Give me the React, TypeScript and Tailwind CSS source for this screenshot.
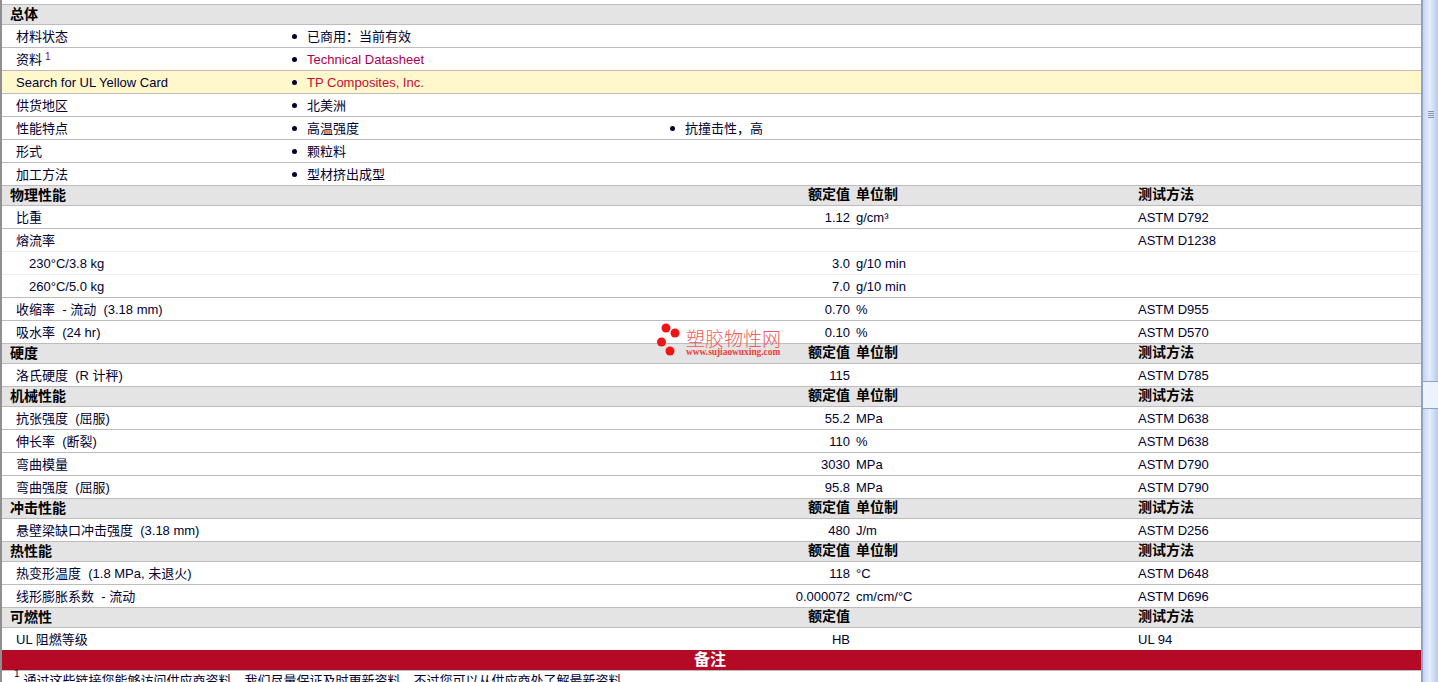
const FONT = "font-['Liberation_Sans','Noto_Sans_CJK_SC',sans-serif]";

type Sect = { type: "section"; title: string; value?: string; unit?: string; test?: string };
type Prop = { type: "prop"; label: string; indent?: boolean; light?: boolean; value?: string; unit?: string; test?: string };
type Row = Sect | Prop;

const physical: Row[] = [
  { type: "section", title: "物理性能", value: "额定值", unit: "单位制", test: "测试方法" },
  { type: "prop", label: "比重", value: "1.12", unit: "g/cm³", test: "ASTM D792" },
  { type: "prop", label: "熔流率", light: true, test: "ASTM D1238" },
  { type: "prop", label: "230°C/3.8 kg", indent: true, light: true, value: "3.0", unit: "g/10 min" },
  { type: "prop", label: "260°C/5.0 kg", indent: true, value: "7.0", unit: "g/10 min" },
  { type: "prop", label: "收缩率  - 流动  (3.18 mm)", value: "0.70", unit: "%", test: "ASTM D955" },
  { type: "prop", label: "吸水率  (24 hr)", value: "0.10", unit: "%", test: "ASTM D570" },
  { type: "section", title: "硬度", value: "额定值", unit: "单位制", test: "测试方法" },
  { type: "prop", label: "洛氏硬度  (R 计秤)", value: "115", test: "ASTM D785" },
  { type: "section", title: "机械性能", value: "额定值", unit: "单位制", test: "测试方法" },
  { type: "prop", label: "抗张强度  (屈服)", value: "55.2", unit: "MPa", test: "ASTM D638" },
  { type: "prop", label: "伸长率  (断裂)", value: "110", unit: "%", test: "ASTM D638" },
  { type: "prop", label: "弯曲模量", value: "3030", unit: "MPa", test: "ASTM D790" },
  { type: "prop", label: "弯曲强度  (屈服)", value: "95.8", unit: "MPa", test: "ASTM D790" },
  { type: "section", title: "冲击性能", value: "额定值", unit: "单位制", test: "测试方法" },
  { type: "prop", label: "悬壁梁缺口冲击强度  (3.18 mm)", value: "480", unit: "J/m", test: "ASTM D256" },
  { type: "section", title: "热性能", value: "额定值", unit: "单位制", test: "测试方法" },
  { type: "prop", label: "热变形温度  (1.8 MPa, 未退火)", value: "118", unit: "°C", test: "ASTM D648" },
  { type: "prop", label: "线形膨胀系数  - 流动", value: "0.000072", unit: "cm/cm/°C", test: "ASTM D696" },
  { type: "section", title: "可燃性", value: "额定值", test: "测试方法" },
  { type: "prop", label: "UL 阻燃等级", value: "HB", test: "UL 94" },
];

function Bullet({ text, link }: { text: string; link?: string }) {
  return (
    <div className="flex items-center">
      <span className="w-[5px] h-[5px] rounded-full bg-[#000033] mr-[10px]" />
      <span className={link}>{text}</span>
    </div>
  );
}

function GeneralRow({ label, sup, yellow, children }: { label: string; sup?: boolean; yellow?: boolean; children: React.ReactNode }) {
  return (
    <div className={`flex items-center h-[23px] pt-[1px] border-b border-[#bdbbc0] ${yellow ? "bg-[#fff8cd]" : "bg-white"}`}>
      <div className="w-[290px] pl-[14px] whitespace-pre shrink-0">
        {label}
        {sup && <sup className="text-[#800080] text-[10px] ml-[3px] -top-[4px]">1</sup>}
      </div>
      {children}
    </div>
  );
}

function SectionRow({ row }: { row: Sect }) {
  return (
    <div className="flex items-center h-[20px] border-b border-[#bdbbc0] bg-[#e4e4e4] font-bold text-black text-[14px]">
      <div className="flex-1 pl-[8px] -mt-[2px]">{row.title}</div>
      <div className="w-[100px] text-right -mt-[4px]">{row.value}</div>
      <div className="w-[288px] pl-[6px] shrink-0 -mt-[4px]">{row.unit}</div>
      <div className="w-[283px] shrink-0 -mt-[4px]">{row.test}</div>
    </div>
  );
}

function PropRow({ row }: { row: Prop }) {
  return (
    <div className={`flex items-center h-[23px] pt-[1px] border-b bg-white ${row.light ? "border-[#eeeeee]" : "border-[#bdbbc0]"}`}>
      <div className={`flex-1 whitespace-pre ${row.indent ? "pl-[27px]" : "pl-[14px]"}`}>{row.label}</div>
      <div className="w-[100px] text-right">{row.value}</div>
      <div className="w-[288px] pl-[6px] shrink-0">{row.unit}</div>
      <div className="w-[283px] shrink-0">{row.test}</div>
    </div>
  );
}

function Watermark() {
  return (
    <div className="absolute left-[656px] top-[322px] w-[130px] h-[38px] pointer-events-none">
      <svg width="30" height="36" className="absolute left-0 top-0">
        <circle cx="10" cy="6" r="4.5" fill="#f01414" />
        <circle cx="19" cy="11" r="4.5" fill="#f01414" />
        <circle cx="5.5" cy="20" r="4.5" fill="#f01414" />
        <circle cx="14" cy="29" r="4.5" fill="#f01414" />
      </svg>
      <div className="absolute left-[30px] top-[6px] text-[19px] leading-[20px] text-[#f05a5a] font-light whitespace-nowrap font-['Noto_Sans_CJK_SC',sans-serif]">
        塑胶物性网
      </div>
      <div className="absolute left-[30px] top-[25px] text-[9.4px] leading-[10px] font-bold text-[#f03c3c] whitespace-nowrap font-['Liberation_Serif',serif]">
        www.sujiaowuxing.com
      </div>
    </div>
  );
}

function Scrollbar() {
  const track = "bg-[linear-gradient(90deg,#c3d5f2,#e4edfb_45%,#b6cbee)]";
  return (
    <aside className="w-[17px] shrink-0 flex flex-col border-l-2 border-[#8ea2c6]">
      <div className={`h-[382px] ${track} border-b border-[#8ea2c6] flex items-start justify-center pt-[111px]`}>
        <div className="w-[6px] flex flex-col gap-[1px]">
          <span className="h-[1px] bg-[#7f93b8]" />
          <span className="h-[1px] bg-[#7f93b8]" />
          <span className="h-[1px] bg-[#7f93b8]" />
          <span className="h-[1px] bg-[#7f93b8]" />
        </div>
      </div>
      <div className="h-[26px] bg-[#edf3fd]" />
      <div className={`flex-1 ${track} border-t border-[#8ea2c6]`} />
    </aside>
  );
}

export default function App() {
  return (
    <div className={`relative flex w-[1438px] h-[682px] overflow-hidden bg-white text-[13px] leading-[14px] text-[#000033] ${FONT}`}>
      <main className="flex-1 min-w-0 border-l-2 border-[#8f8f8f]">
        <div className="h-[4px]" />
        <div className="border-t border-[#bdbbc0]">
          <SectionRow row={{ type: "section", title: "总体" }} />
          <GeneralRow label="材料状态"><Bullet text="已商用：当前有效" /></GeneralRow>
          <GeneralRow label="资料" sup><Bullet text="Technical Datasheet" link="text-[#a8004f]" /></GeneralRow>
          <GeneralRow label="Search for UL Yellow Card" yellow><Bullet text="TP Composites, Inc." link="text-[#c80a32]" /></GeneralRow>
          <GeneralRow label="供货地区"><Bullet text="北美洲" /></GeneralRow>
          <GeneralRow label="性能特点">
            <div className="w-[378px] shrink-0"><Bullet text="高温强度" /></div>
            <Bullet text="抗撞击性，高" />
          </GeneralRow>
          <GeneralRow label="形式"><Bullet text="颗粒料" /></GeneralRow>
          <GeneralRow label="加工方法"><Bullet text="型材挤出成型" /></GeneralRow>
          {physical.map((row, i) =>
            row.type === "section" ? <SectionRow key={i} row={row} /> : <PropRow key={i} row={row} />
          )}
          <div className="relative -mt-px h-[21px] pr-[3px] bg-[#b50a26] text-white text-center text-[16px] leading-[20px] font-bold border-b border-[#bdbbc0]">备注</div>
          <div className="flex pl-[12px] pt-[3px] whitespace-nowrap">
            <sup className="text-[10px] mr-[4px] top-0">1</sup>
            <span>通过这些链接您能够访问供应商资料。我们尽量保证及时更新资料，不过您可以从供应商处了解最新资料。</span>
          </div>
        </div>
      </main>
      <Scrollbar />
      <Watermark />
    </div>
  );
}
